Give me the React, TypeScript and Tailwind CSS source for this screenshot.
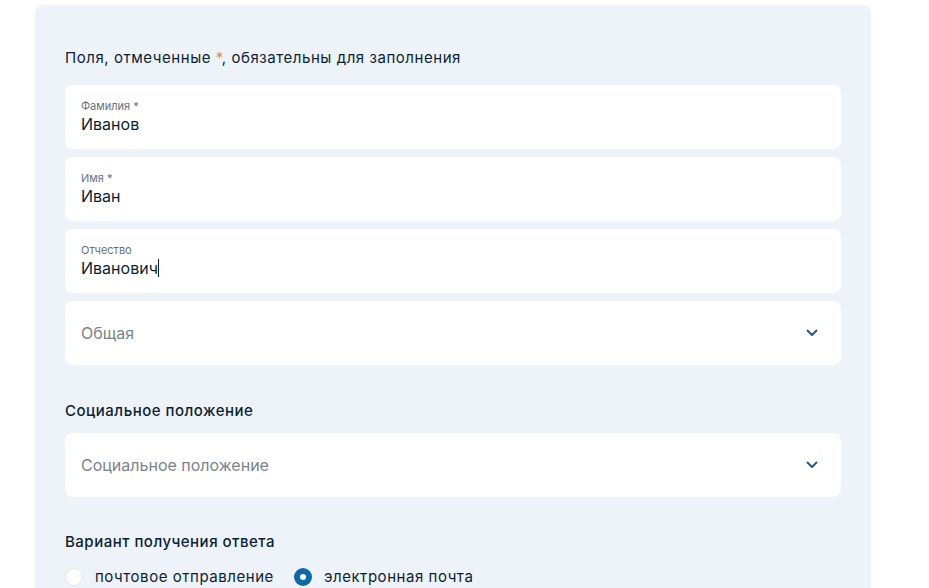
import React from "react";

function Chevron() {
  return (
    <svg width="12" height="8" viewBox="0 0 12 8" fill="none">
      <path d="M1.5 1.5L6 6L10.5 1.5" stroke="#2a5a85" strokeWidth="2" strokeLinecap="round" strokeLinejoin="round" />
    </svg>
  );
}

function TextField({ label, value, cursor }: { label: string; value: string; cursor?: boolean }) {
  return (
    <div className="h-[64px] bg-white rounded-lg px-4 flex flex-col justify-center">
      <div className="text-[11px] leading-[14px] text-[#66727f]">{label}</div>
      <div className="text-[16px] leading-[22px] text-[#0b1f33] flex items-center">
        {value}
        {cursor && <span className="inline-block w-[1px] h-[18px] bg-[#0b1f33]" />}
      </div>
    </div>
  );
}

function Select({ placeholder }: { placeholder: string }) {
  return (
    <div className="h-[64px] bg-white rounded-lg pl-4 pr-[23px] flex items-center justify-between">
      <span className="text-[16px] text-[#7b838c]">{placeholder}</span>
      <Chevron />
    </div>
  );
}

export default function App() {
  return (
    <div className="w-[929px] h-[588px] bg-white overflow-hidden" style={{ fontFamily: "Inter, 'Noto Sans', sans-serif" }}>
      <div className="ml-[35px] mt-[5px] w-[836px] h-[620px] bg-[#eef2f9] rounded-lg pl-[30px] pr-[30px] pt-[42px]">
        <div className="text-[15px] leading-[22px] tracking-[0.55px] text-[#0b1f33] mb-[16px]">
          Поля, отмеченные <span className="text-[#ee8545]">*</span>, обязательны для заполнения
        </div>
        <div className="flex flex-col gap-2">
          <TextField label="Фамилия *" value="Иванов" />
          <TextField label="Имя *" value="Иван" />
          <TextField label="Отчество" value="Иванович" cursor />
          <Select placeholder="Общая" />
        </div>
        <div className="mt-[35px] text-[15px] leading-[22px] tracking-[0.5px] font-medium text-[#0b1f33] mb-[11px]">Социальное положение</div>
        <Select placeholder="Социальное положение" />
        <div className="mt-[34px] text-[15px] leading-[22px] tracking-[0.5px] font-medium text-[#0b1f33] mb-[13px]">Вариант получения ответа</div>
        <div className="flex items-center text-[15px] tracking-[0.55px] text-[#0b1f33]">
          <span className="w-[18px] h-[18px] rounded-full bg-white border border-[#e3e8ee]" />
          <span className="ml-[12px]">почтовое отправление</span>
          <span className="ml-[20px] w-[18px] h-[18px] rounded-full bg-[#0d6aa8] flex items-center justify-center">
            <span className="w-[6px] h-[6px] rounded-full bg-white" />
          </span>
          <span className="ml-[12px]">электронная почта</span>
        </div>
      </div>
    </div>
  );
}
